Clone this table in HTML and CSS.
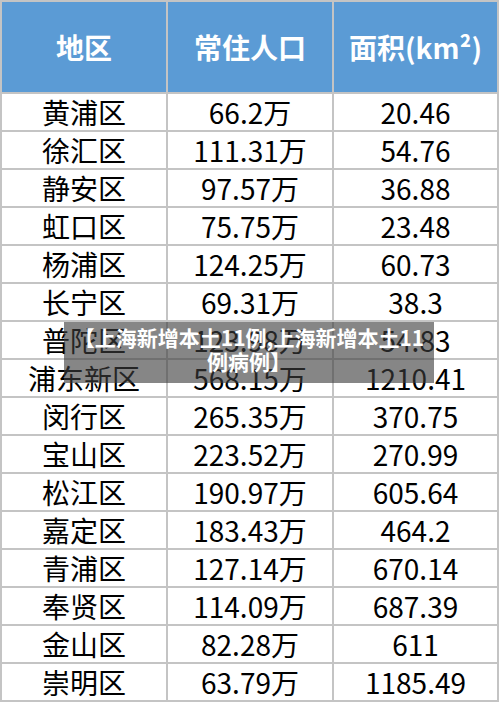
FILE: index.html
```html
<!DOCTYPE html>
<html lang="zh">
<head>
<meta charset="utf-8">
<link rel="stylesheet" href="styles.css">
</head>
<body>
<div class="wrap">
<table class="data">
<thead>
<tr><th>地区</th><th>常住人口</th><th>面积(km²)</th></tr>
</thead>
<tbody>
<tr><td>黄浦区</td><td>66.2万</td><td>20.46</td></tr>
<tr><td>徐汇区</td><td>111.31万</td><td>54.76</td></tr>
<tr><td>静安区</td><td>97.57万</td><td>36.88</td></tr>
<tr><td>虹口区</td><td>75.75万</td><td>23.48</td></tr>
<tr><td>杨浦区</td><td>124.25万</td><td>60.73</td></tr>
<tr><td>长宁区</td><td>69.31万</td><td>38.3</td></tr>
<tr><td>普陀区</td><td>123.98万</td><td>54.83</td></tr>
<tr><td>浦东新区</td><td>568.15万</td><td>1210.41</td></tr>
<tr><td>闵行区</td><td>265.35万</td><td>370.75</td></tr>
<tr><td>宝山区</td><td>223.52万</td><td>270.99</td></tr>
<tr><td>松江区</td><td>190.97万</td><td>605.64</td></tr>
<tr><td>嘉定区</td><td>183.43万</td><td>464.2</td></tr>
<tr><td>青浦区</td><td>127.14万</td><td>670.14</td></tr>
<tr><td>奉贤区</td><td>114.09万</td><td>687.39</td></tr>
<tr><td>金山区</td><td>82.28万</td><td>611</td></tr>
<tr><td>崇明区</td><td>63.79万</td><td>1185.49</td></tr>
</tbody>
</table>
<div class="caption">【上海新增本土11例,上海新增本土11例病例】</div>
</div>
</body>
</html>
```
FILE: styles.css
```css
html, body {
  margin: 0;
  padding: 0;
  background: #ffffff;
}
.wrap {
  position: relative;
  width: 500px;
  height: 704px;
  overflow: hidden;
}
.data {
  border-collapse: collapse;
  table-layout: fixed;
  width: 499px;
  font-family: "Noto Sans CJK SC", "Open Sans", sans-serif;
  color: #000;
}
.data th, .data td {
  border: 2px solid #c4c4c4;
  text-align: center;
  padding: 0;
  font-size: 28px;
  line-height: 36px;
}
.data th:nth-child(1), .data td:nth-child(1) { width: 164px; }
.data th:nth-child(2), .data td:nth-child(2) { width: 164px; }
.data th {
  background: #5b9bd5;
  color: #ffffff;
  font-weight: 700;
  height: 90px;
  line-height: 90px;
}
.data td {
  height: 36px;
  font-weight: 400;
}
.caption {
  position: absolute;
  left: 64px;
  top: 322px;
  width: 370px;
  height: 61px;
  box-sizing: border-box;
  padding: 3px 0 0 0;
  background: rgba(60, 60, 60, 0.62);
  color: #ffffff;
  font-family: "Noto Sans CJK SC", sans-serif;
  font-weight: 700;
  font-size: 21px;
  line-height: 24px;
  text-align: center;
}
```
